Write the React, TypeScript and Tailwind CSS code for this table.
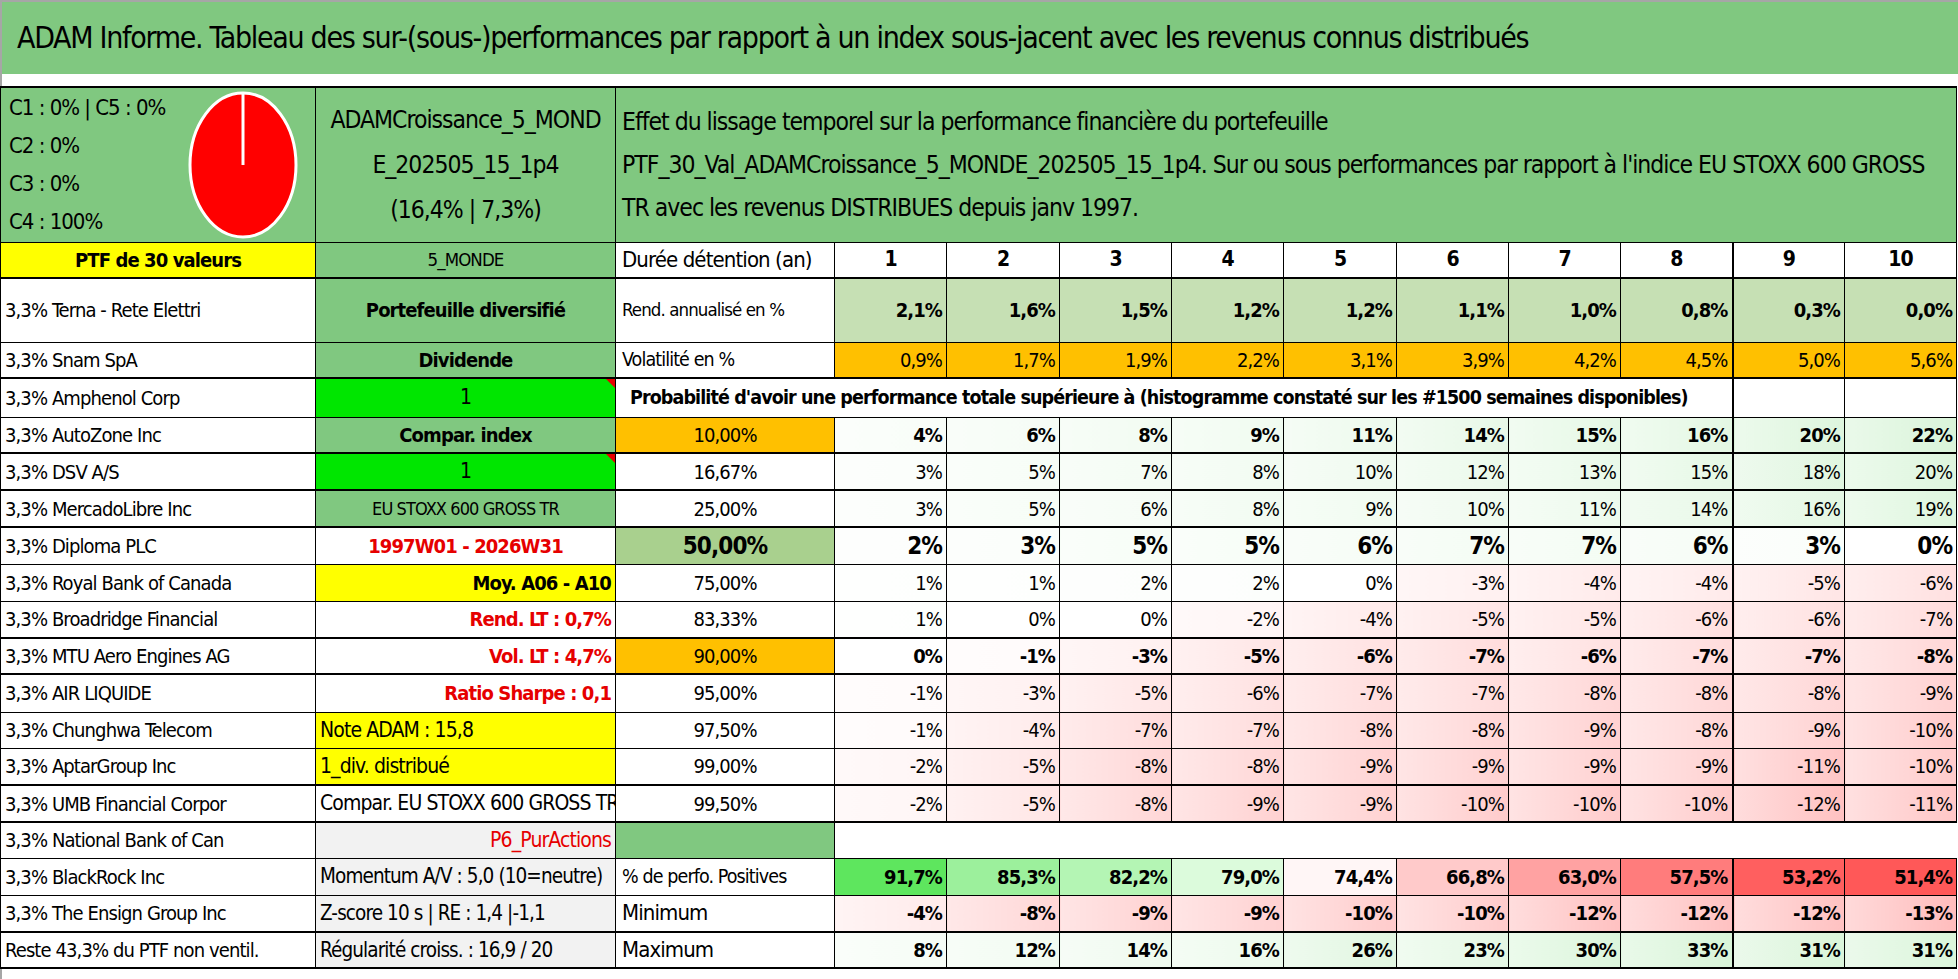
import React from 'react'

const G = 'bg-[#80c880]'
const BG = 'bg-[#00e600]'
const Y = 'bg-[#ffff00]'
const O = 'bg-[#ffc000]'
const GR = 'bg-[#f2f2f2]'
const RED = 'text-[#e60000]'

function mix(hex: string, t: number) {
    const r = parseInt(hex.slice(1, 3), 16)
    const g = parseInt(hex.slice(3, 5), 16)
    const b = parseInt(hex.slice(5, 7), 16)
    const m = (c: number) => Math.round(255 + (c - 255) * t)
    return `rgb(${m(r)}, ${m(g)}, ${m(b)})`
}

function heat(v: number, posMax = 25, negMax = 13) {
    if (v === 0) return '#ffffff'
    const base = v > 0 ? '#d4f3d4' : '#ffbcbc'
    const t = Math.min(Math.abs(v) / (v > 0 ? posMax : negMax), 1)
    return `linear-gradient(to right, ${mix(base, t * 0.55)}, ${mix(base, t)})`
}

const stocks = [
    '3,3% Terna - Rete Elettri',
    '3,3% Snam SpA',
    '3,3% Amphenol Corp',
    '3,3% AutoZone Inc',
    '3,3% DSV A/S',
    '3,3% MercadoLibre Inc',
    '3,3% Diploma PLC',
    '3,3% Royal Bank of Canada',
    '3,3% Broadridge Financial',
    '3,3% MTU Aero Engines AG',
    '3,3% AIR LIQUIDE',
    '3,3% Chunghwa Telecom',
    '3,3% AptarGroup Inc',
    '3,3% UMB Financial Corpor',
    '3,3% National Bank of Can',
    '3,3% BlackRock Inc',
    '3,3% The Ensign Group Inc',
    'Reste 43,3% du PTF non ventil.',
]

type BCell = { text: string; cls: string; flag?: boolean }

const colB: BCell[] = [
    { text: 'Portefeuille diversifié', cls: `${G} text-center font-bold` },
    { text: 'Dividende', cls: `${G} text-center font-bold` },
    { text: '1', cls: `${BG} text-center text-[21px]`, flag: true },
    { text: 'Compar. index', cls: `${G} text-center font-bold` },
    { text: '1', cls: `${BG} text-center text-[21px]`, flag: true },
    { text: 'EU STOXX 600 GROSS TR', cls: `${G} text-center text-[18px]` },
    { text: '1997W01 - 2026W31', cls: `bg-white text-center font-bold ${RED}` },
    { text: 'Moy. A06 - A10', cls: `${Y} text-right font-bold` },
    { text: 'Rend. LT : 0,7%', cls: `bg-white text-right font-bold ${RED}` },
    { text: 'Vol. LT : 4,7%', cls: `bg-white text-right font-bold ${RED}` },
    { text: 'Ratio Sharpe : 0,1', cls: `bg-white text-right font-bold ${RED}` },
    { text: 'Note ADAM : 15,8', cls: `${Y} text-left text-[21px]` },
    { text: '1_div. distribué', cls: `${Y} text-left text-[21px]` },
    { text: 'Compar. EU STOXX 600 GROSS TR', cls: 'bg-white text-left text-[21px]' },
    { text: 'P6_PurActions', cls: `${GR} text-right text-[21px] ${RED}` },
    { text: 'Momentum A/V : 5,0 (10=neutre)', cls: `${GR} text-left text-[20.5px]` },
    { text: 'Z-score 10 s | RE : 1,4 |-1,1', cls: `${GR} text-left text-[20.5px]` },
    { text: 'Régularité croiss. : 16,9 / 20', cls: `${GR} text-left text-[20.5px]` },
]

const heights = [64, 36, 39, 36, 37, 37, 37, 37, 37, 36, 38, 36, 37, 37, 36, 37, 37, 36]
const thick = [1, 3, 4, 5, 8, 9, 12, 13, 16, 17]

const rend = ['2,1%', '1,6%', '1,5%', '1,2%', '1,2%', '1,1%', '1,0%', '0,8%', '0,3%', '0,0%']
const vol = ['0,9%', '1,7%', '1,9%', '2,2%', '3,1%', '3,9%', '4,2%', '4,5%', '5,0%', '5,6%']

type ProbRow = { p: string; pCls?: string; bold?: boolean; big?: boolean; v: number[] }

const prob: ProbRow[] = [
    { p: '10,00%', pCls: O, bold: true, v: [4, 6, 8, 9, 11, 14, 15, 16, 20, 22] },
    { p: '16,67%', v: [3, 5, 7, 8, 10, 12, 13, 15, 18, 20] },
    { p: '25,00%', v: [3, 5, 6, 8, 9, 10, 11, 14, 16, 19] },
    { p: '50,00%', pCls: 'bg-[#a9d08e]', bold: true, big: true, v: [2, 3, 5, 5, 6, 7, 7, 6, 3, 0] },
    { p: '75,00%', v: [1, 1, 2, 2, 0, -3, -4, -4, -5, -6] },
    { p: '83,33%', v: [1, 0, 0, -2, -4, -5, -5, -6, -6, -7] },
    { p: '90,00%', pCls: O, bold: true, v: [0, -1, -3, -5, -6, -7, -6, -7, -7, -8] },
    { p: '95,00%', v: [-1, -3, -5, -6, -7, -7, -8, -8, -8, -9] },
    { p: '97,50%', v: [-1, -4, -7, -7, -8, -8, -9, -8, -9, -10] },
    { p: '99,00%', v: [-2, -5, -8, -8, -9, -9, -9, -9, -11, -10] },
    { p: '99,50%', v: [-2, -5, -8, -9, -9, -10, -10, -10, -12, -11] },
]

const positives = ['91,7%', '85,3%', '82,2%', '79,0%', '74,4%', '66,8%', '63,0%', '57,5%', '53,2%', '51,4%']
const posColors = ['#5ee65e', '#9cf09c', '#b4f5b4', '#dcfbdc', '#fff6f6', '#ffcaca', '#ffa2a2', '#ff7c7c', '#ff5f5f', '#ff5858']
const minimum = [-4, -8, -9, -9, -10, -10, -12, -12, -12, -13]
const maximum = [8, 12, 14, 16, 26, 23, 30, 33, 31, 31]

const cell = 'border border-black px-[4px] whitespace-nowrap overflow-hidden align-middle'

function Pie() {
    return (
        <svg width="112" height="150" viewBox="0 0 112 150" className="shrink-0">
            <ellipse cx="56" cy="75" rx="53" ry="72" fill="#ff0000" stroke="#ffffff" strokeWidth="3" />
            <line x1="56" y1="75" x2="56" y2="3" stroke="#ffffff" strokeWidth="3" />
        </svg>
    )
}

function Flag() {
    return <span className="absolute right-0 top-0 h-0 w-0 border-l-[9px] border-t-[9px] border-l-transparent border-t-[#e60000]" />
}

function Values({ row, th }: { row: number; th: string }) {
    const sep = (i: number) => (i === 7 ? 'border-r-2' : '')
    if (row === 0) {
        return (
            <>
                {rend.map((v, i) => (
                    <td key={i} className={`${cell} ${th} ${sep(i)} bg-[#c6e0b4] text-right font-bold`}>{v}</td>
                ))}
            </>
        )
    }
    if (row === 1) {
        return (
            <>
                {vol.map((v, i) => (
                    <td key={i} className={`${cell} ${th} ${sep(i)} ${O} text-right`}>{v}</td>
                ))}
            </>
        )
    }
    if (row >= 3 && row <= 13) {
        const r = prob[row - 3]
        return (
            <>
                {r.v.map((v, i) => (
                    <td
                        key={i}
                        className={`${cell} ${th} ${sep(i)} text-right ${r.bold ? 'font-bold' : ''} ${r.big ? 'text-[24px]' : ''}`}
                        style={{ background: heat(v) }}
                    >
                        {v}%
                    </td>
                ))}
            </>
        )
    }
    if (row === 14) {
        return (
            <>
                {rend.map((_, i) => (
                    <td key={i} className="bg-white" />
                ))}
            </>
        )
    }
    if (row === 15) {
        return (
            <>
                {positives.map((v, i) => (
                    <td key={i} className={`${cell} ${th} ${sep(i)} text-right font-bold`} style={{ background: posColors[i] }}>
                        {v}
                    </td>
                ))}
            </>
        )
    }
    const data = row === 16 ? minimum : maximum
    return (
        <>
            {data.map((v, i) => (
                <td key={i} className={`${cell} ${th} ${sep(i)} text-right font-bold`} style={{ background: heat(v, 36, 13) }}>
                    {v}%
                </td>
            ))}
        </>
    )
}

function ColC({ row, th }: { row: number; th: string }) {
    if (row === 0) return <td className={`${cell} ${th} bg-white pl-[6px] text-[18.5px]`}>Rend. annualisé en %</td>
    if (row === 1) return <td className={`${cell} ${th} bg-white pl-[6px] text-[19.5px]`}>Volatilité en %</td>
    if (row >= 3 && row <= 13) {
        const r = prob[row - 3]
        return (
            <td className={`${cell} ${th} text-center ${r.pCls ?? 'bg-white'} ${r.big ? 'text-[24px] font-bold' : ''}`}>{r.p}</td>
        )
    }
    if (row === 14) return <td className={`${cell} ${th} ${G}`} />
    if (row === 15) return <td className={`${cell} ${th} bg-white pl-[6px] text-[19.5px]`}>% de perfo. Positives</td>
    return <td className={`${cell} ${th} bg-white pl-[6px] text-[22px]`}>{row === 16 ? 'Minimum' : 'Maximum'}</td>
}

export default function App() {
    const yearCols = Array.from({ length: 10 }, (_, i) => i + 1)
    return (
        <div className="w-[1958px] bg-white text-black font-['DejaVu_Sans_Condensed','DejaVu_Sans',sans-serif] [font-stretch:condensed] text-[20px] tracking-[-0.9px] leading-none">
            <div className={`h-[74px] border-t-2 border-l-2 border-[#a6a6a6] ${G} flex items-center pl-[15px] text-[30px] tracking-[-1.3px]`}>
                ADAM Informe. Tableau des sur-(sous-)performances par rapport à un index sous-jacent avec les revenus connus distribués
            </div>
            <div className="h-[12px] border-l-2 border-[#a6a6a6]" />
            <table className="table-fixed border-collapse w-[1956px]">
                <colgroup>
                    <col className="w-[315px]" />
                    <col className="w-[300px]" />
                    <col className="w-[219px]" />
                    {yearCols.map((y) => (
                        <col key={y} className={y === 2 || y === 5 ? 'w-[113px]' : 'w-[112px]'} />
                    ))}
                </colgroup>
                <tbody>
                    <tr className="h-[155px]">
                        <td className={`${cell} border-t-2 ${G} px-0`}>
                            <div className="flex items-center justify-between pl-[4px] pr-[12px]">
                                <div className="flex flex-col text-[22px] leading-[38px] tracking-[-1px]">
                                    <span>C1 : 0% | C5 : 0%</span>
                                    <span>C2 : 0%</span>
                                    <span>C3 : 0%</span>
                                    <span>C4 : 100%</span>
                                </div>
                                <Pie />
                            </div>
                        </td>
                        <td className={`${cell} border-t-2 ${G} text-center text-[24.5px] tracking-[-1px] leading-[45px]`}>
                            <div>ADAMCroissance_5_MOND</div>
                            <div>E_202505_15_1p4</div>
                            <div>(16,4% | 7,3%)</div>
                        </td>
                        <td colSpan={11} className={`${cell} border-t-2 ${G} pl-[6px] text-[24.5px] tracking-[-1px] leading-[43px]`}>
                            <div>Effet du lissage temporel sur la performance financière du portefeuille</div>
                            <div>PTF_30_Val_ADAMCroissance_5_MONDE_202505_15_1p4. Sur ou sous performances par rapport à l'indice EU STOXX 600 GROSS</div>
                            <div>TR avec les revenus DISTRIBUES depuis janv 1997.</div>
                        </td>
                    </tr>
                    <tr className="h-[36px]">
                        <td className={`${cell} border-b-2 ${Y} text-center font-bold`}>PTF de 30 valeurs</td>
                        <td className={`${cell} border-b-2 ${G} text-center text-[18.5px]`}>5_MONDE</td>
                        <td className={`${cell} border-b-2 bg-white pl-[6px] text-[22px]`}>Durée détention (an)</td>
                        {yearCols.map((y) => (
                            <td key={y} className={`${cell} border-b-2 bg-white text-center font-bold text-[21px] ${y === 8 ? 'border-r-2' : ''}`}>
                                {y}
                            </td>
                        ))}
                    </tr>
                    {stocks.map((s, row) => {
                        const th = thick.includes(row) ? 'border-b-2' : ''
                        const b = colB[row]
                        return (
                            <tr key={row} style={{ height: heights[row] }}>
                                <td className={`${cell} ${th} bg-white`}>{s}</td>
                                <td className={`${cell} ${th} ${b.cls} relative`}>
                                    {b.text}
                                    {b.flag && <Flag />}
                                </td>
                                {row === 2 ? (
                                    <>
                                        <td colSpan={9} className={`${cell} ${th} border-r-2 bg-white pl-[14px] font-bold text-[19.5px]`}>
                                            Probabilité d'avoir une performance totale supérieure à (histogramme constaté sur les #1500 semaines disponibles)
                                        </td>
                                        <td className={`${cell} ${th} bg-white`} />
                                        <td className={`${cell} ${th} bg-white`} />
                                    </>
                                ) : (
                                    <>
                                        <ColC row={row} th={th} />
                                        <Values row={row} th={th} />
                                    </>
                                )}
                            </tr>
                        )
                    })}
                </tbody>
            </table>
            <div className="h-[12px] border-b-2 border-l-2 border-[#a6a6a6]" />
        </div>
    )
}
